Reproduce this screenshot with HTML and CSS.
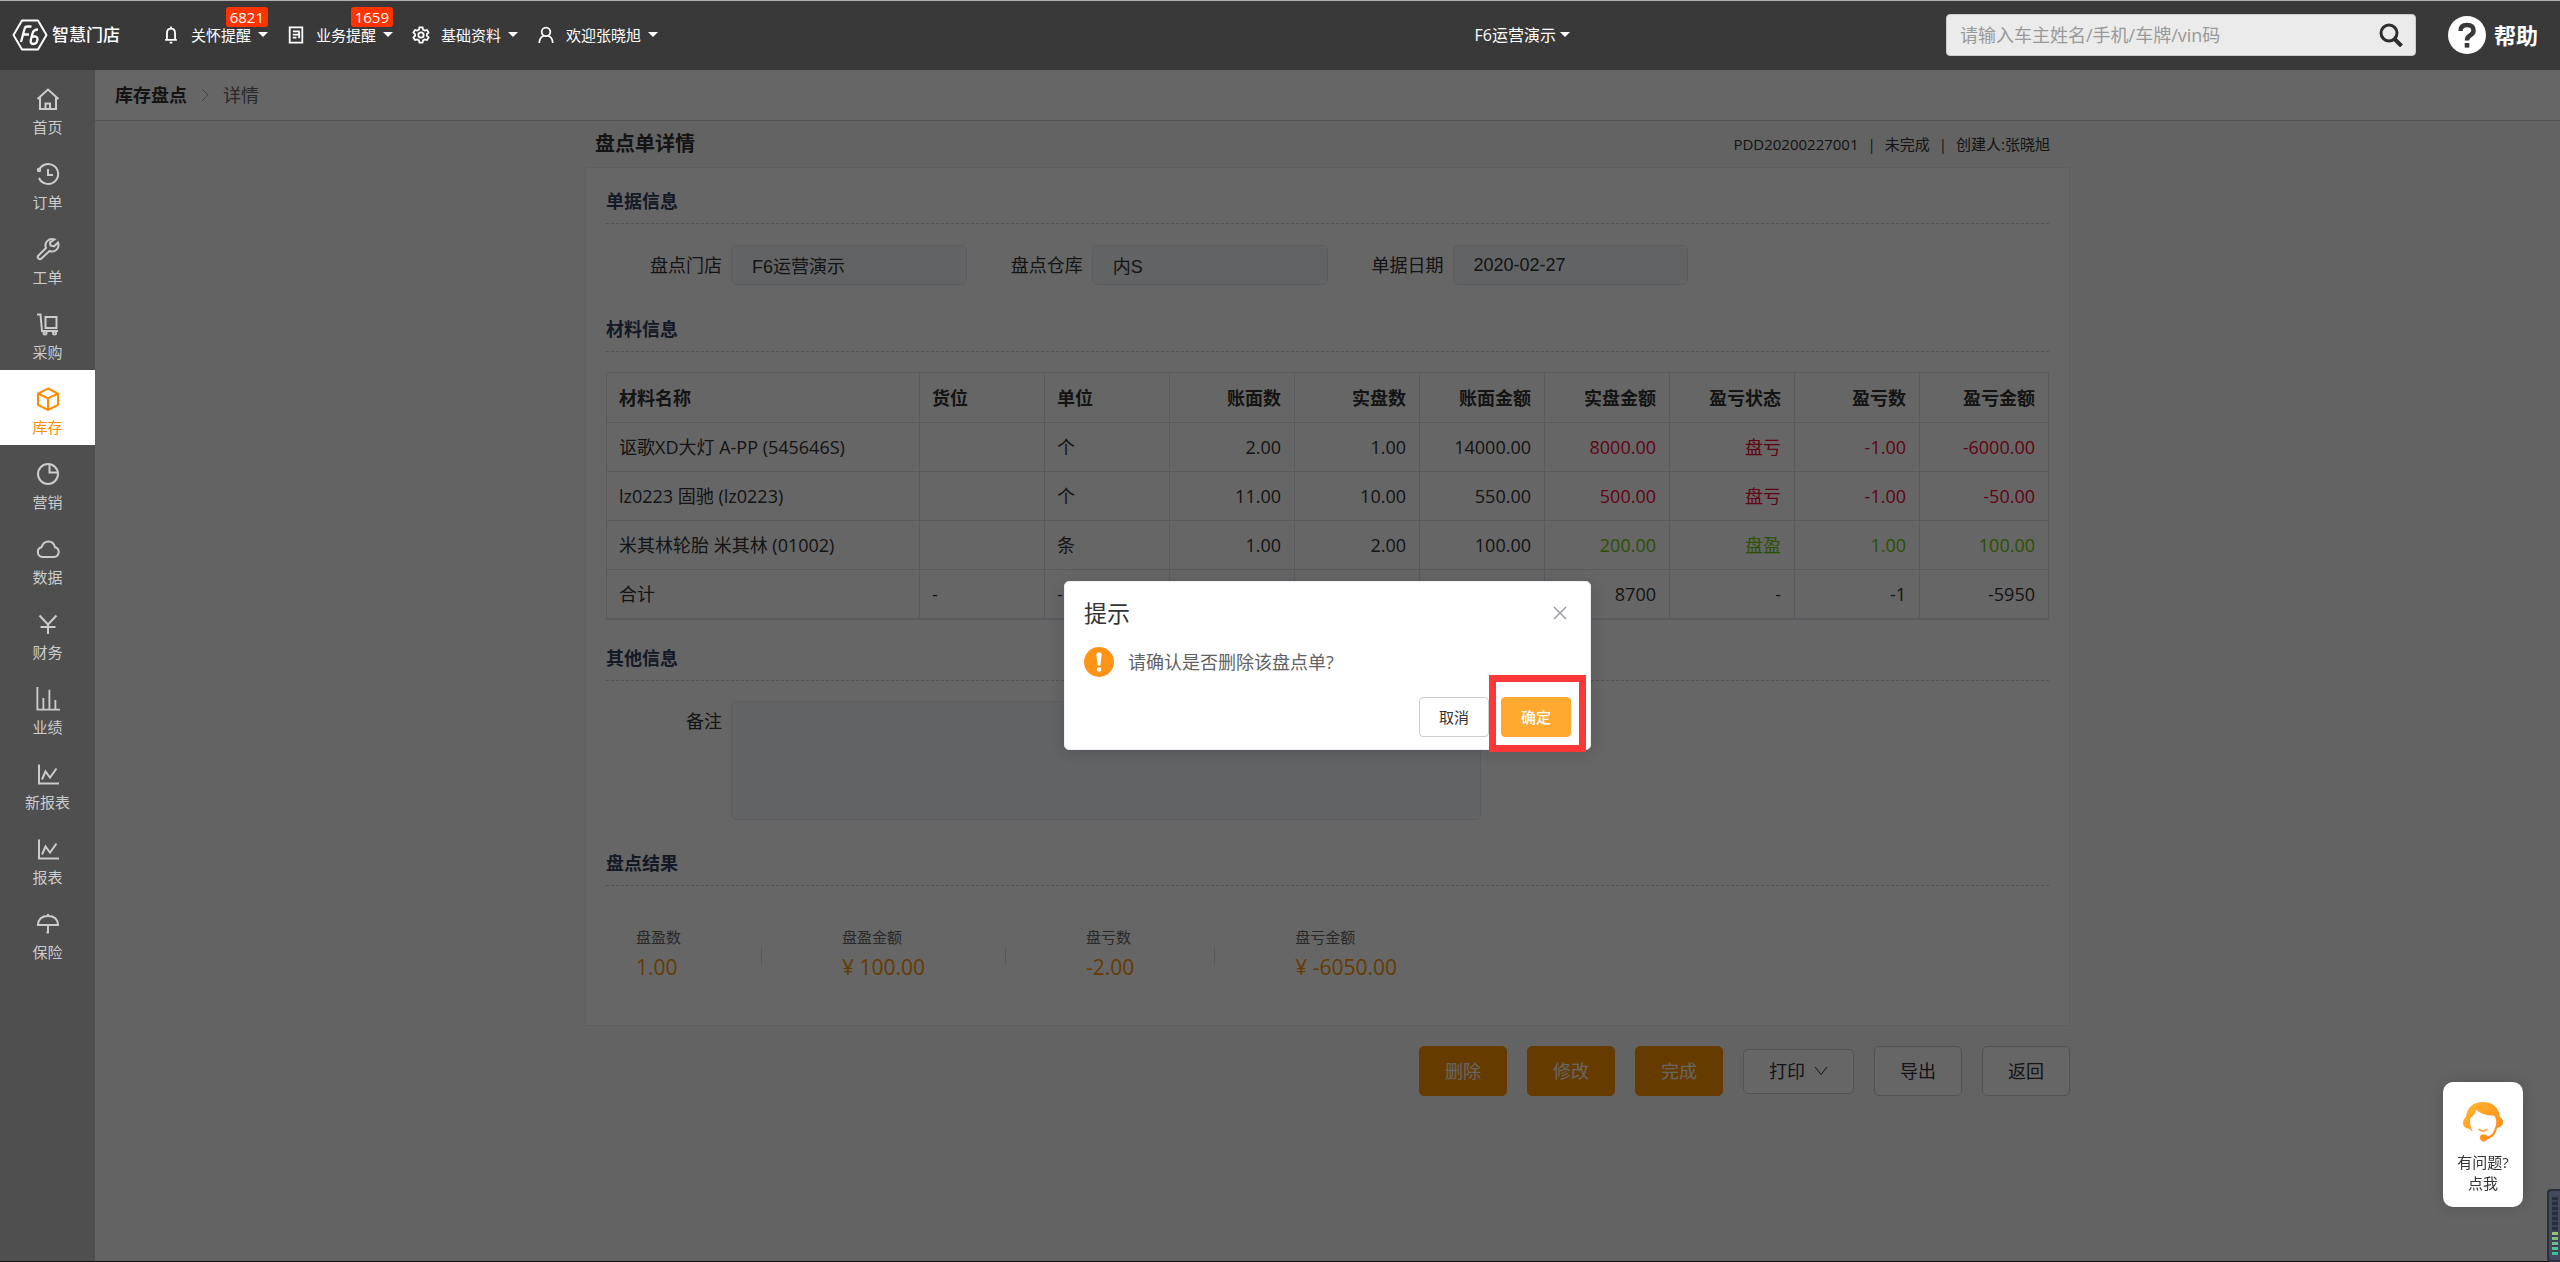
FILE: index.html
```html
<!DOCTYPE html>
<html lang="zh-CN">
<head>
<meta charset="utf-8">
<title>盘点单详情</title>
<link rel="stylesheet" href="styles.css">
</head>
<body>
<div class="app">
  <header class="topbar">
    <a class="brand" href="#">
      <svg class="brand-mark" viewBox="0 0 36 32" fill="none" stroke="#fff" stroke-width="2" stroke-linejoin="round">
        <path d="M10 1.500H26L34.500 16 26 30.500H10L1.500 16Z"/>
        <path stroke-width="2.300" d="M9 23 12.500 10Q13 7.500 15.500 7.500H19.500M11 15.500H17M26 10.500Q21.500 10.500 20.500 14.500L18.800 21Q18 25 21.500 25 24.500 25 25.300 21.500 26.200 17.500 22.800 17.500H20"/>
      </svg>
      <span>智慧门店</span>
    </a>
    <nav class="topnav">
      <a class="topnav-item" href="#">
        <svg class="nav-icon" viewBox="0 0 20 20"><path d="M5.500 15.500V8Q5.500 3 10 3T14.500 8V15.500M3.500 15.500H16.500M8.500 18.500H11.500M10 0.500V3"/></svg>
        关怀提醒<i class="caret"></i><span class="badge">6821</span>
      </a>
      <a class="topnav-item" href="#">
        <svg class="nav-icon" viewBox="0 0 20 20"><path d="M3 1.500H17V18.500H3ZM6.500 6H14M6.500 9.500H14M6.500 13H10.500M13.500 6V13.500"/></svg>
        业务提醒<i class="caret"></i><span class="badge">1659</span>
      </a>
      <a class="topnav-item" href="#">
        <svg class="nav-icon" viewBox="0 0 20 20"><circle cx="10" cy="10" r="3"/><path d="M8.300 1.500H11.700L12.300 4 14.200 5.100 16.700 4.400 18.400 7.300 16.600 9V11L18.400 12.700 16.700 15.600 14.200 14.900 12.300 16 11.700 18.500H8.300L7.700 16 5.800 14.900 3.300 15.600 1.600 12.700 3.400 11V9L1.600 7.300 3.300 4.400 5.800 5.100 7.700 4Z"/></svg>
        基础资料<i class="caret"></i>
      </a>
      <a class="topnav-item" href="#">
        <svg class="nav-icon" viewBox="0 0 20 20"><circle cx="10" cy="6.500" r="4.800"/><path d="M2.500 19Q2.500 13 7.500 10.800M17.500 19Q17.500 13 12.500 10.800"/></svg>
        欢迎张晓旭<i class="caret"></i>
      </a>
    </nav>
    <a class="store" href="#">F6运营演示<i class="caret"></i></a>
    <form class="search">
      <input type="text" placeholder="请输入车主姓名/手机/车牌/vin码" aria-label="搜索">
      <button type="button" aria-label="搜索">
        <svg viewBox="0 0 24 24" fill="none" stroke="#2e2e2e" stroke-width="3"><circle cx="10" cy="10" r="8"/><path d="M15.500 16 22.500 23" stroke-width="4"/></svg>
      </button>
    </form>
    <a class="help" href="#">
      <svg viewBox="0 0 38 38"><circle cx="19" cy="19" r="19" fill="#fff"/><path d="M12.500 15Q12.500 9 19 9T25.500 14.500Q25.500 17.500 22 19.500 19 21.200 19 24.500" fill="none" stroke="#393939" stroke-width="4.500"/><rect x="16.700" y="27" width="4.600" height="4.600" fill="#393939"/></svg>
      帮助
    </a>
  </header>

  <div class="body">
    <aside class="sidebar">
      <a class="side-item" href="#"><svg viewBox="0 0 24 24"><path d="M1.500 12 12 2.500 22.500 12M4 10V22H20V10M9.500 22V16.500H14V22"/></svg>首页</a>
      <a class="side-item" href="#"><svg viewBox="0 0 24 24"><path d="M3.200 7.500A10 10 0 1 1 3 16M12 7V13H17"/><circle cx="3" cy="8" r="1.200"/></svg>订单</a>
      <a class="side-item" href="#"><svg viewBox="0 0 24 24"><path d="M18.500 2.500A6.500 6.500 0 0 0 10 11L2.500 18.500A2.100 2.100 0 0 0 5.500 21.500L13.500 14A6.500 6.500 0 0 0 22 5.500L18 9.500 14.500 8.500 14 5.500Z"/></svg>工单</a>
      <a class="side-item" href="#"><svg viewBox="0 0 24 24"><path d="M1 2.500H4.500L6 19H22M9.500 5H20.500V16H9.500Z"/><circle cx="9" cy="21" r="1.500"/><circle cx="18.500" cy="21" r="1.500"/></svg>采购</a>
      <a class="side-item active" href="#"><svg viewBox="0 0 24 24"><path d="M12 1.500 22 6.500V18L12 23 2 18V6.500ZM2 6.500 12 11.500 22 6.500M12 11.500V23"/></svg>库存</a>
      <a class="side-item" href="#"><svg viewBox="0 0 24 24"><circle cx="12" cy="12" r="10"/><path d="M13.500 2V10.500H22"/></svg>营销</a>
      <a class="side-item" href="#"><svg viewBox="0 0 24 24"><path d="M6.500 20A5 5 0 0 1 5.500 10.200Q7.500 4.500 12.500 4.500 17.500 4.500 19 10.200A5 5 0 0 1 18 20Z"/></svg>数据</a>
      <a class="side-item" href="#"><svg viewBox="0 0 24 24"><path d="M3.500 3.500 12 12.500 20.500 3.500M12 12.500V22M4.500 15H19.500"/></svg>财务</a>
      <a class="side-item" href="#"><svg class="wide" viewBox="0 0 26 26"><path d="M1.500 0V24.500H26M8 12V24M14.500 3V24M21 14V24"/></svg>业绩</a>
      <a class="side-item" href="#"><svg viewBox="0 0 24 24"><path d="M3 2.500V21.500H23M6 17.500 9.500 9.500 14 15.500 20.500 6.500"/></svg>新报表</a>
      <a class="side-item" href="#"><svg viewBox="0 0 24 24"><path d="M3 2.500V21.500H23M6 17.500 9.500 9.500 14 15.500 20.500 6.500"/></svg>报表</a>
      <a class="side-item" href="#"><svg viewBox="0 0 24 24"><path d="M2 13Q2.500 4 12 4T22 13ZM12 2V4M12 13V20.500H10.500"/></svg>保险</a>
    </aside>

    <main class="main">
      <nav class="crumbs">
        <a href="#">库存盘点</a>
        <svg viewBox="0 0 8 14" fill="none" stroke="#a8abb2"><path d="M1 1 7 7 1 13"/></svg>
        <span>详情</span>
      </nav>

      <div class="page">
        <div class="page-head">
          <h1>盘点单详情</h1>
          <p class="meta"><span>PDD20200227001</span><span>|</span><span>未完成</span><span>|</span><span>创建人:张晓旭</span></p>
        </div>

        <div class="card">
          <h2>单据信息</h2>
          <div class="fields">
            <div class="field"><label for="shop">盘点门店</label><input id="shop" type="text" value="F6运营演示" readonly></div>
            <div class="field"><label for="depot">盘点仓库</label><input id="depot" type="text" value="内S" readonly></div>
            <div class="field"><label for="date">单据日期</label><input id="date" type="text" value="2020-02-27" readonly></div>
          </div>

          <h2>材料信息</h2>
          <table class="items">
            <thead>
              <tr><th class="name">材料名称</th><th class="left">货位</th><th class="left">单位</th><th>账面数</th><th>实盘数</th><th>账面金额</th><th>实盘金额</th><th>盈亏状态</th><th>盈亏数</th><th class="last">盈亏金额</th></tr>
            </thead>
            <tbody>
              <tr><td class="left">讴歌XD大灯 A-PP (545646S)</td><td class="left"></td><td class="left">个</td><td>2.00</td><td>1.00</td><td>14000.00</td><td class="loss">8000.00</td><td class="loss">盘亏</td><td class="loss">-1.00</td><td class="loss">-6000.00</td></tr>
              <tr><td class="left">lz0223 固驰 (lz0223)</td><td class="left"></td><td class="left">个</td><td>11.00</td><td>10.00</td><td>550.00</td><td class="loss">500.00</td><td class="loss">盘亏</td><td class="loss">-1.00</td><td class="loss">-50.00</td></tr>
              <tr><td class="left">米其林轮胎 米其林 (01002)</td><td class="left"></td><td class="left">条</td><td>1.00</td><td>2.00</td><td>100.00</td><td class="gain">200.00</td><td class="gain">盘盈</td><td class="gain">1.00</td><td class="gain">100.00</td></tr>
            </tbody>
            <tfoot>
              <tr><td class="left">合计</td><td class="left">-</td><td class="left">-</td><td></td><td></td><td></td><td>8700</td><td>-</td><td>-1</td><td>-5950</td></tr>
            </tfoot>
          </table>

          <h2>其他信息</h2>
          <div class="note">
            <label for="note">备注</label><textarea id="note" readonly></textarea>
          </div>

          <h2>盘点结果</h2>
          <dl class="stats">
            <div><dt>盘盈数</dt><dd>1.00</dd></div>
            <div><dt>盘盈金额</dt><dd>¥ 100.00</dd></div>
            <div><dt>盘亏数</dt><dd>-2.00</dd></div>
            <div><dt>盘亏金额</dt><dd>¥ -6050.00</dd></div>
          </dl>
        </div>

        <div class="actions">
          <button class="btn primary" type="button">删除</button>
          <button class="btn primary" type="button">修改</button>
          <button class="btn primary" type="button">完成</button>
          <button class="btn print" type="button">打印<svg viewBox="0 0 14 10" fill="none" stroke="#333"><path d="M1 1 7 8.500 13 1"/></svg></button>
          <button class="btn" type="button">导出</button>
          <button class="btn" type="button">返回</button>
        </div>
      </div>

      <div class="mask">
        <section class="dialog" role="dialog" aria-labelledby="dialog-title">
          <div class="dialog-head">
            <h3 id="dialog-title">提示</h3>
            <button class="close" type="button" aria-label="关闭"><svg viewBox="0 0 14 14" fill="none" stroke="#909399" stroke-width="1.300"><path d="M1 1 13 13M13 1 1 13"/></svg></button>
          </div>
          <div class="dialog-body">
            <svg viewBox="0 0 30 30"><circle cx="15" cy="15" r="15" fill="#ff9318"/><path d="M12.300 7.500Q12.300 5.500 15 5.500T17.700 7.500L16.400 18.500H13.600Z" fill="#fff"/><circle cx="15" cy="22.500" r="2.300" fill="#fff"/></svg>
            <p>请确认是否删除该盘点单?</p>
          </div>
          <div class="dialog-foot">
            <button class="cancel" type="button">取消</button>
            <span class="marked"><button class="confirm" type="button">确定</button></span>
          </div>
        </section>
      </div>
    </main>
  </div>
</div>

<a class="service" href="#">
  <svg viewBox="0 0 40 40" fill="none">
    <defs><linearGradient id="hair" x1="0" y1="0" x2="1" y2="1"><stop offset="0" stop-color="#ffb932"/><stop offset="1" stop-color="#ff8114"/></linearGradient></defs>
    <path fill="url(#hair)" d="M3 15C4 5 11 0 20 0S36 5 37 15C41 17 41 23 37 25L34 26C33 31 30 36 24 37.500 22 41 17 39.500 17 35.500S22 31 25 34.500C29 33 31 30 31.500 27 34 22 34 17 31 13.500 23 13.500 17 11.500 13 7.500 12.500 12 10 14 7.500 16 6.500 21 7.500 26 10 30 7.500 28 6 26 5 26.500-1 26-1.500 18 3 15Z"/>
    <path stroke="#ff9a28" stroke-width="1.600" d="M15.500 27Q20 31 24.500 27"/>
  </svg>
  <span>有问题?</span><span>点我</span>
</a>
<div class="meter"></div>
</body>
</html>
```
FILE: styles.css
```css
* { box-sizing: border-box; }

body {
  margin: 0;
  font: 18px/24px "Open Sans", "Noto Sans CJK SC", sans-serif;
  color: #333;
}

a { color: inherit; text-decoration: none; }
h1, h2, h3, p, dl, dd { margin: 0; }
svg { display: block; flex: none; }
button, input, textarea { font: inherit; color: inherit; }
button { cursor: pointer; }

.app {
  display: flex;
  flex-direction: column;
  min-height: 100vh;
  border-bottom: 1px solid #111;
}

/* Top bar */
.topbar {
  display: flex;
  align-items: center;
  height: 70px;
  padding: 0 22px 2px 12px;
  border-top: 1px solid #b0b0b0;
  background: #393939;
  color: #fff;
}
.brand {
  display: flex;
  align-items: center;
  gap: 4px;
  font-size: 17px;
  font-weight: 500;
}
.brand-mark { width: 36px; height: 32px; }
.topnav {
  display: flex;
  gap: 19px;
  margin-left: 42px;
  font-size: 15px;
}
.topnav-item {
  position: relative;
  display: flex;
  align-items: center;
}
.nav-icon {
  width: 18px;
  height: 18px;
  margin-right: 11px;
  fill: none;
  stroke: #fff;
  stroke-width: 2;
}
.caret {
  margin-left: 7px;
  border: 5px solid transparent;
  border-top-color: currentColor;
  border-bottom: 0;
}
.badge {
  position: absolute;
  right: 0;
  top: -16px;
  padding: 0 4px;
  border-radius: 3px;
  background: #f30;
  line-height: 20px;
}
.store {
  display: flex;
  align-items: center;
  margin-left: auto;
  margin-right: 376px;
  font-size: 16px;
}
.store .caret { margin-left: 4px; }
.search {
  display: flex;
  width: 470px;
  height: 42px;
  border: 1px solid #ccc;
  border-radius: 4px;
  background: #ebebeb;
}
.search input {
  flex: 1;
  min-width: 0;
  padding: 0 13px;
  border: 0;
  background: none;
  color: #333;
}
.search input::placeholder { color: #999; }
.search button {
  padding: 0 12px;
  border: 0;
  background: none;
}
.search svg { width: 24px; height: 24px; }
.help {
  display: flex;
  align-items: center;
  gap: 8px;
  margin-left: 32px;
  font-size: 22px;
  font-weight: 700;
}
.help svg { width: 38px; height: 38px; }

/* Side menu */
.body { display: flex; flex: 1; }
.sidebar {
  flex: none;
  width: 95px;
  background: #4f4f4f;
}
.side-item {
  display: flex;
  flex-direction: column;
  align-items: center;
  gap: 4px;
  height: 75px;
  padding-top: 17px;
  color: #ccc;
  font-size: 15px;
}
.side-item svg {
  width: 24px;
  height: 24px;
  fill: none;
  stroke: currentColor;
  stroke-width: 2;
}
.side-item.active { background: #fff; color: #ff8a00; }

/* Page */
.main {
  position: relative;
  flex: 1;
  min-width: 0;
  background: #f8f8f8;
}
.crumbs {
  display: flex;
  align-items: center;
  gap: 14px;
  height: 51px;
  padding: 0 20px;
  border-bottom: 1px solid #ccc;
  background: #fff;
  color: #666;
}
.crumbs a { color: #333; font-weight: 700; }
.crumbs svg { width: 8px; height: 14px; }
.page {
  max-width: 1485px;
  margin: 0 auto;
}
.page-head {
  display: flex;
  align-items: center;
  justify-content: space-between;
  height: 46px;
  padding: 0 20px 0 10px;
}
h1 { font-size: 20px; }
.meta { display: flex; gap: 9px; font-size: 15px; }
.card {
  padding: 11px 20px 40px;
  border: 1px solid #ebebeb;
  background: #fff;
}
h2 {
  border-bottom: 1px dashed #ccc;
  color: #33435c;
  font-size: 18px;
  line-height: 44px;
}
.fields {
  display: grid;
  grid-template-columns: repeat(4, minmax(0, 1fr));
  padding: 21px 0 22px;
}
.field, .note { display: flex; }
.field label, .note label {
  flex: none;
  width: 125px;
  padding-right: 9px;
  line-height: 40px;
  text-align: right;
}
.field input, textarea {
  min-width: 0;
  border: 1px solid #e4e7ed;
  border-radius: 5px;
  background: #f5f7fa;
}
.field input {
  flex: 1;
  height: 40px;
  padding: 0 20px;
  font-family: "Liberation Sans", "Noto Sans CJK SC", sans-serif;
}
.items {
  width: 100%;
  margin: 20px 0 16px;
  border: 1px solid #dfe1ec;
  border-right: 0;
  border-spacing: 0;
  table-layout: fixed;
}
.items th, .items td {
  height: 49px;
  padding: 0 13px 0 12px;
  border-right: 1px solid #dfe1ec;
  border-bottom: 1px solid #dfe1ec;
  text-align: right;
}
.items th { height: 50px; }
.items .left, .items .name { text-align: left; }
.items .name { width: 313px; }
.items .last { width: 129px; }
.items .loss { color: #f5052d; }
.items .gain { color: #6cc800; }
.note { padding: 20px 0 21px; }
textarea {
  flex: 0 1 750px;
  height: 119px;
  resize: none;
}
.stats {
  display: flex;
  padding: 39px 30px 0;
}
.stats div + div {
  position: relative;
  margin-left: 80px;
  padding-left: 81px;
}
.stats div + div::before {
  content: "";
  position: absolute;
  left: 0;
  top: 22px;
  height: 18px;
  border-left: 1px solid #dcdcdc;
}
.stats dt { color: #666; font-size: 15px; }
.stats dd { color: #ff9300; font-size: 21px; line-height: 36px; }
.actions {
  display: flex;
  align-items: center;
  justify-content: flex-end;
  gap: 20px;
  margin-top: 20px;
}
.btn {
  width: 88px;
  height: 50px;
  padding: 0;
  border: 1px solid #ccc;
  border-radius: 5px;
  background: #fff;
}
.btn.primary { border-color: #ff9300; background: #ff9300; color: #fff; }
.btn.print {
  display: flex;
  align-items: center;
  justify-content: center;
  gap: 9px;
  width: 111px;
  height: 45px;
}
.btn svg { width: 14px; height: 10px; }

/* Confirmation dialog */
.mask {
  position: absolute;
  inset: 0;
  display: flex;
  align-items: center;
  justify-content: center;
  background: rgba(0, 0, 0, .6);
}
.dialog {
  width: 527px;
  padding: 17px 19px 12px;
  border: 1px solid #ebeef5;
  border-radius: 5px;
  background: #fff;
  box-shadow: 0 2px 15px rgba(0, 0, 0, .15);
}
.dialog-head {
  display: flex;
  align-items: center;
  justify-content: space-between;
}
.dialog h3 { font-size: 23px; font-weight: 400; line-height: 28px; }
.close {
  padding: 4px;
  border: 0;
  background: none;
}
.close svg { width: 14px; height: 14px; }
.dialog-body {
  display: flex;
  align-items: center;
  gap: 14px;
  margin: 20px 0;
  color: #606266;
}
.dialog-body svg { width: 30px; height: 30px; }
.dialog-foot {
  display: flex;
  justify-content: flex-end;
  gap: 12px;
}
.dialog-foot button {
  width: 70px;
  height: 40px;
  padding: 0;
  border: 1px solid #ccc;
  border-radius: 4px;
  background: #fff;
  font-size: 15px;
}
.dialog-foot .confirm { border-color: #ffa930; background: #ffa930; color: #fff; font-weight: 500; }
.marked { position: relative; display: flex; }
.marked::after {
  content: "";
  position: absolute;
  inset: -22px -15px -15px -12px;
  border: 7px solid #fb3838;
}

/* Floating items */
.service {
  position: fixed;
  right: 37px;
  bottom: 55px;
  display: flex;
  flex-direction: column;
  align-items: center;
  width: 80px;
  height: 125px;
  padding-top: 20px;
  border-radius: 10px;
  background: #fff;
  box-shadow: 0 0 15px rgba(0, 0, 0, .15);
  font-size: 15px;
  line-height: 21px;
}
.service svg { width: 40px; height: 40px; margin-bottom: 10px; }
.meter {
  position: fixed;
  right: 0;
  bottom: 0;
  width: 13px;
  height: 73px;
  border: 2px solid #2b2f3c;
  border-right: 0;
  border-radius: 4px 0 0 4px;
  background:
    repeating-linear-gradient(transparent 0 3px, #3b4154 3px 5px) 3px 6px / 6px 58px no-repeat,
    linear-gradient(#2a2e3b 60%, #9fc070 60%, #35c0a0) 3px 6px / 6px 58px no-repeat,
    #434a5e;
}
```
